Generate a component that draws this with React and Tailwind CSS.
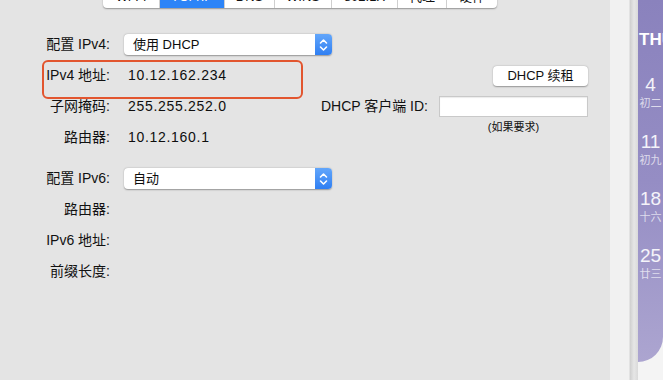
import React from 'react';

const font = "font-['Liberation_Sans','Noto_Sans_CJK_SC',sans-serif]";

const tabs = [
    { name: 'Wi-Fi', w: 'w-[56px]' },
    { name: 'TCP/IP', w: 'w-[65px]', active: true },
    { name: 'DNS', w: 'w-[50px]' },
    { name: 'WINS', w: 'w-[57px]' },
    { name: '802.1X', w: 'w-[66px]' },
    { name: '代理', w: 'w-[49px]' },
    { name: '硬件', w: 'w-[51px]' },
];

const calendar = [
    { day: '4', lunar: '初二' },
    { day: '11', lunar: '初九' },
    { day: '18', lunar: '十六' },
    { day: '25', lunar: '廿三' },
];

const Stepper = () => (
    <div className="w-[17px] h-full rounded-r-[4px] bg-gradient-to-b from-[#62a6fb] to-[#2f7ff2] flex items-center justify-center">
        <svg width="9" height="14" viewBox="0 0 9 14" fill="none" stroke="white" strokeWidth="1.6" strokeLinecap="round" strokeLinejoin="round">
            <path d="M1.5 5 L4.5 2 L7.5 5" />
            <path d="M1.5 9 L4.5 12 L7.5 9" />
        </svg>
    </div>
);

const Select = ({ value }) => (
    <div className="ml-[14px] w-[208px] h-[21px] flex bg-white rounded-[4px] shadow-[0_0.5px_1.5px_rgba(0,0,0,0.35)]">
        <div className="flex-1 pl-[9px] text-[13px] leading-[21px] text-[#0e0e0e]">{value}</div>
        <Stepper />
    </div>
);

const Label = ({ children }) => (
    <div className="w-[110px] text-right text-[14px] text-[#111]">{children}</div>
);

const Value = ({ children }) => (
    <div className="ml-[18px] text-[14px] tracking-[0.7px] text-[#0e0e0e]">{children}</div>
);

const App = () => {
    return (
        <div className={`w-[663px] h-[380px] flex overflow-hidden ${font}`}>
            {/* network panel */}
            <div className="w-[610px] h-full bg-[#e4e4e4] flex flex-col">
                <div className="-mt-[14px] ml-[103px] h-[22px] w-fit flex bg-white rounded-b-[4px] shadow-[0_0.5px_1.5px_rgba(0,0,0,0.35)] overflow-hidden">
                    {tabs.map((t, i) => (
                        <div
                            key={t.name}
                            className={`${t.w} h-full flex items-center justify-center text-[13px] ${t.active ? 'bg-[#2c84f7] text-white' : 'text-[#111]'} ${i > 0 ? 'border-l border-[#cfcfcf]' : ''}`}
                        >
                            {t.name}
                        </div>
                    ))}
                </div>

                <div className="mt-[21px] flex flex-col">
                    <div className="h-[31px] flex items-center">
                        <Label>配置 IPv4:</Label>
                        <Select value="使用 DHCP" />
                    </div>

                    <div className="relative h-[31px] flex items-center">
                        <Label>IPv4 地址:</Label>
                        <Value>10.12.162.234</Value>
                        <div className="ml-auto mr-[22px] w-[95px] h-[20px] bg-white rounded-[4px] shadow-[0_0.5px_1.5px_rgba(0,0,0,0.35)] flex items-center justify-center text-[13px] text-[#111]">
                            DHCP 续租
                        </div>
                        <div className="absolute top-0 left-[42px] w-[261px] h-[39px] border-[2.5px] border-[#e2552f] rounded-[6px]" />
                    </div>

                    <div className="h-[31px] flex items-center">
                        <Label>子网掩码:</Label>
                        <Value>255.255.252.0</Value>
                        <div className="ml-auto text-[14px] text-[#111]">DHCP 客户端 ID:</div>
                        <div className="ml-[11px] mr-[22px] w-[149px] h-[21px] bg-white border border-[#c9c9c9] shadow-[inset_0_1px_1px_rgba(0,0,0,0.08)]" />
                    </div>

                    <div className="h-[31px] flex items-center">
                        <Label>路由器:</Label>
                        <Value>10.12.160.1</Value>
                        <div className="self-start -mt-[2px] ml-auto mr-[22px] w-[149px] text-center text-[11px] leading-[14px] text-[#111]">
                            (如果要求)
                        </div>
                    </div>

                    <div className="mt-[10px] h-[31px] flex items-center">
                        <Label>配置 IPv6:</Label>
                        <Select value="自动" />
                    </div>
                    <div className="h-[31px] flex items-center">
                        <Label>路由器:</Label>
                    </div>
                    <div className="h-[31px] flex items-center">
                        <Label>IPv6 地址:</Label>
                    </div>
                    <div className="h-[31px] flex items-center">
                        <Label>前缀长度:</Label>
                    </div>
                </div>
            </div>

            {/* window edge */}
            <div className="w-[20px] h-full bg-[#f1f1f1] border-r border-[#e2e2e2]" />
            <div className="w-[8px] h-full bg-gradient-to-r from-[#cfcfcf] via-[#e6e6e6] to-[#dadada]" />

            {/* calendar sliver */}
            <div className="flex-1 h-full flex flex-col bg-[#f4f4f4] overflow-hidden">
                <div className="h-[362px] rounded-br-[30px] bg-gradient-to-b from-[#8a82bd] via-[#958dc4] to-[#aca5d0] flex flex-col text-white">
                    <div className="mt-[31px] pl-[1px] h-[18px] text-[17px] font-bold leading-[18px] whitespace-nowrap">THU</div>
                    <div className="mt-[25px] flex flex-col">
                        {calendar.map(c => (
                            <div key={c.day} className="h-[57px] flex flex-col items-center">
                                <div className="text-[19px] leading-[22px] text-white/90">{c.day}</div>
                                <div className="text-[11px] leading-[14px] text-white/70 whitespace-nowrap">{c.lunar}</div>
                            </div>
                        ))}
                    </div>
                </div>
            </div>
        </div>
    );
};

export default App;
